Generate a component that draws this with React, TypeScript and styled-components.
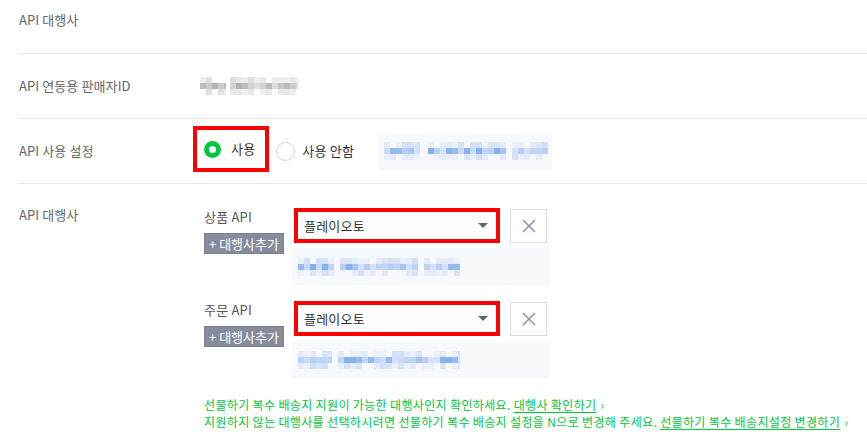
import React from "react";
import styled, { createGlobalStyle } from "styled-components";

const Global = createGlobalStyle`
  html, body { margin: 0; padding: 0; background: #fff; }
  body { font-family: "Noto Sans CJK KR", "Noto Sans", sans-serif; }
  * { box-sizing: border-box; }
`;

const Page = styled.div`
  width: 867px;
  padding-left: 19px;
`;

const Row = styled.div<{ $h?: number; $top?: boolean; $last?: boolean }>`
  display: flex;
  align-items: ${(p) => (p.$top ? "flex-start" : "center")};
  height: ${(p) => (p.$h ? `${p.$h}px` : "auto")};
  border-bottom: ${(p) => (p.$last ? "none" : "1px solid #e7e7e7")};
  padding-top: ${(p) => (p.$top ? "11px" : "0")};
`;

const Label = styled.div<{ $shift?: number }>`
  width: 174px;
  flex: none;
  font-size: 13px;
  line-height: 18px;
  color: #666;
  letter-spacing: 0.1px;
  margin-top: ${(p) => p.$shift ?? 0}px;
`;

const ValueCol = styled.div`
  display: flex;
  align-items: center;
`;

const MosaicWrap = styled.div<{ $ml?: number }>`
  display: flex;
  margin-left: ${(p) => p.$ml ?? 0}px;
`;

const HighlightBox = styled.div`
  display: inline-flex;
  align-items: center;
  height: 46px;
  border: 4px solid #ff0000;
  padding: 0 10px 0 7px;
  margin-bottom: 4px;
`;

const RadioOn = styled.span`
  width: 17px;
  height: 17px;
  border-radius: 50%;
  border: 5px solid #00c73c;
  background: #fff;
  flex: none;
`;

const RadioOff = styled.span`
  width: 19px;
  height: 19px;
  border-radius: 50%;
  border: 1px solid #d6d6d6;
  background: #fff;
  flex: none;
  margin-left: 7px;
`;

const RadioText = styled.span<{ $gap: number }>`
  font-size: 13px;
  line-height: 18px;
  color: #333;
  margin-left: ${(p) => p.$gap}px;
  letter-spacing: 0.2px;
`;

const Panel = styled.div<{ $w: number; $ml?: number; $mt?: number }>`
  width: ${(p) => p.$w}px;
  height: 37px;
  background: #f7f9fd;
  display: flex;
  align-items: center;
  padding-left: 6px;
  margin-left: ${(p) => p.$ml ?? 0}px;
  margin-top: ${(p) => p.$mt ?? 0}px;
`;

const AgencyCol = styled.div`
  display: flex;
  flex-direction: column;
  padding-left: 11px;
  padding-top: 13px;
`;

const ApiGroup = styled.div<{ $mt?: number }>`
  display: flex;
  margin-top: ${(p) => p.$mt ?? 0}px;
`;

const SubLabelCol = styled.div`
  width: 90px;
  flex: none;
  display: flex;
  flex-direction: column;
  align-items: flex-start;
`;

const SubLabel = styled.div`
  font-size: 13px;
  line-height: 18px;
  color: #555;
  letter-spacing: 0.2px;
`;

const AddButton = styled.button`
  margin-top: 7px;
  width: 80px;
  height: 21px;
  border: 1px solid #7b8091;
  background: #878c9c;
  color: #fff;
  font-family: inherit;
  font-size: 13px;
  line-height: 18px;
  padding: 0;
  letter-spacing: 0;
  cursor: pointer;
`;

const SelectCol = styled.div`
  display: flex;
  flex-direction: column;
`;

const SelectRow = styled.div`
  display: flex;
  align-items: flex-start;
  gap: 10px;
`;

const SelectBox = styled.div`
  width: 206px;
  height: 35px;
  border: 4px solid #ff0000;
  background: #fff;
  display: flex;
  align-items: center;
  justify-content: space-between;
  padding: 0 8px 0 6px;
  font-size: 13px;
  color: #333;
  letter-spacing: 0.2px;
`;

const Caret = styled.span`
  width: 0;
  height: 0;
  border-left: 5px solid transparent;
  border-right: 5px solid transparent;
  border-top: 5px solid #666;
`;

const CloseButton = styled.button`
  width: 37px;
  height: 34px;
  margin-top: 1px;
  border: 1px solid #d8dbe0;
  background: #fff;
  display: flex;
  align-items: center;
  justify-content: center;
  padding: 0;
`;

const Notes = styled.div`
  margin-top: 18px;
  font-size: 12px;
  line-height: 17px;
  color: #00c73c;
  letter-spacing: 0.35px;
  white-space: nowrap;
`;

const NoteLink = styled.a`
  color: #00c73c;
  text-decoration: underline;
  text-underline-offset: 2px;
`;

const Chevron = styled.span`
  margin-left: 4px;
  color: #00c73c;
`;

const BLUE = ["#c9dbf6", "#b7cff4", "#a6c5f2", "#95bbf0", "#86b2ee", "#bfd5f5", "#d2e1f7"];
const BLUE_LIGHT = ["#e4ecf9", "#dae5f8", "#d3e0f7", "#ebf0fa"];
const GRAY = ["#d2d2d2", "#c6c6c6", "#bcbcbc", "#dcdcdc", "#b2b2b2", "#cccccc"];
const GRAY_LIGHT = ["#e8e8e8", "#e0e0e0", "#eeeeee"];

function rnd(n: number) {
  const x = Math.sin(n * 12.9898 + 78.233) * 43758.5453;
  return x - Math.floor(x);
}

function Mosaic({
  words,
  palette,
  light,
  seed,
  cell = 6,
}: {
  words: [number, number][];
  palette: string[];
  light: string[];
  seed: number;
  cell?: number;
}) {
  const width = Math.max(...words.map(([x, w]) => x + w));
  const rects: React.ReactNode[] = [];
  let k = seed;
  words.forEach(([x0, w]) => {
    const cols = Math.ceil(w / cell);
    for (let c = 0; c < cols; c++) {
      for (let r = 0; r < 3; r++) {
        k++;
        const v = rnd(k);
        if (r !== 1 && v > 0.8) continue;
        const pal = r === 1 ? palette : light;
        const col = pal[Math.floor(rnd(k + 500) * pal.length)];
        rects.push(
          <rect
            key={`${x0}-${c}-${r}`}
            x={x0 + c * cell}
            y={r * cell}
            width={Math.min(cell, w - c * cell)}
            height={cell}
            fill={col}
          />
        );
      }
    }
  });
  return (
    <svg width={width} height={cell * 3} viewBox={`0 0 ${width} ${cell * 3}`}>
      {rects}
    </svg>
  );
}

function XIcon() {
  return (
    <svg width="16" height="16" viewBox="0 0 16 16">
      <path d="M2 2 L14 14 M14 2 L2 14" stroke="#8e95a5" strokeWidth="1.6" fill="none" />
    </svg>
  );
}

function ApiSelect({
  label,
  mt,
  seed,
  words,
}: {
  label: string;
  mt?: number;
  seed: number;
  words: [number, number][];
}) {
  return (
    <ApiGroup $mt={mt}>
      <SubLabelCol>
        <SubLabel>{label}</SubLabel>
        <AddButton>+ 대행사추가</AddButton>
      </SubLabelCol>
      <SelectCol>
        <SelectRow>
          <SelectBox>
            <span>플레이오토</span>
            <Caret />
          </SelectBox>
          <CloseButton aria-label="삭제">
            <XIcon />
          </CloseButton>
        </SelectRow>
        <Panel $w={258} $ml={-2} $mt={5}>
          <Mosaic words={words} palette={BLUE} light={BLUE_LIGHT} seed={seed} />
        </Panel>
      </SelectCol>
    </ApiGroup>
  );
}

export default function App() {
  return (
    <>
      <Global />
      <Page>
        <Row $h={54} $top>
          <Label>API 대행사</Label>
        </Row>
        <Row $h={65}>
          <Label>API 연동용 판매자ID</Label>
          <ValueCol>
            <MosaicWrap $ml={7}>
              <Mosaic
                words={[
                  [0, 26],
                  [30, 68],
                ]}
                palette={GRAY}
                light={GRAY_LIGHT}
                seed={11}
              />
            </MosaicWrap>
          </ValueCol>
        </Row>
        <Row $h={65}>
          <Label>API 사용 설정</Label>
          <ValueCol>
            <HighlightBox>
              <RadioOn />
              <RadioText $gap={10}>사용</RadioText>
            </HighlightBox>
            <RadioOff />
            <RadioText $gap={7}>사용 안함</RadioText>
            <Panel $w={174} $ml={24}>
              <Mosaic
                words={[
                  [0, 36],
                  [44, 78],
                  [128, 36],
                ]}
                palette={BLUE}
                light={BLUE_LIGHT}
                seed={41}
              />
            </Panel>
          </ValueCol>
        </Row>
        <Row $top $last>
          <Label $shift={11}>API 대행사</Label>
          <AgencyCol>
            <ApiSelect
              label="상품 API"
              seed={71}
              words={[
                [0, 36],
                [42, 78],
                [126, 36],
              ]}
            />
            <ApiSelect
              label="주문 API"
              mt={16}
              seed={133}
              words={[
                [0, 34],
                [40, 122],
              ]}
            />
            <Notes>
              <div>
                선물하기 복수 배송지 지원이 가능한 대행사인지 확인하세요.{" "}
                <NoteLink>대행사 확인하기</NoteLink>
                <Chevron>›</Chevron>
              </div>
              <div>
                지원하지 않는 대행사를 선택하시려면 선물하기 복수 배송지 설정을 N으로 변경해 주세요.{" "}
                <NoteLink>선물하기 복수 배송지설정 변경하기</NoteLink>
                <Chevron>›</Chevron>
              </div>
            </Notes>
          </AgencyCol>
        </Row>
      </Page>
    </>
  );
}
